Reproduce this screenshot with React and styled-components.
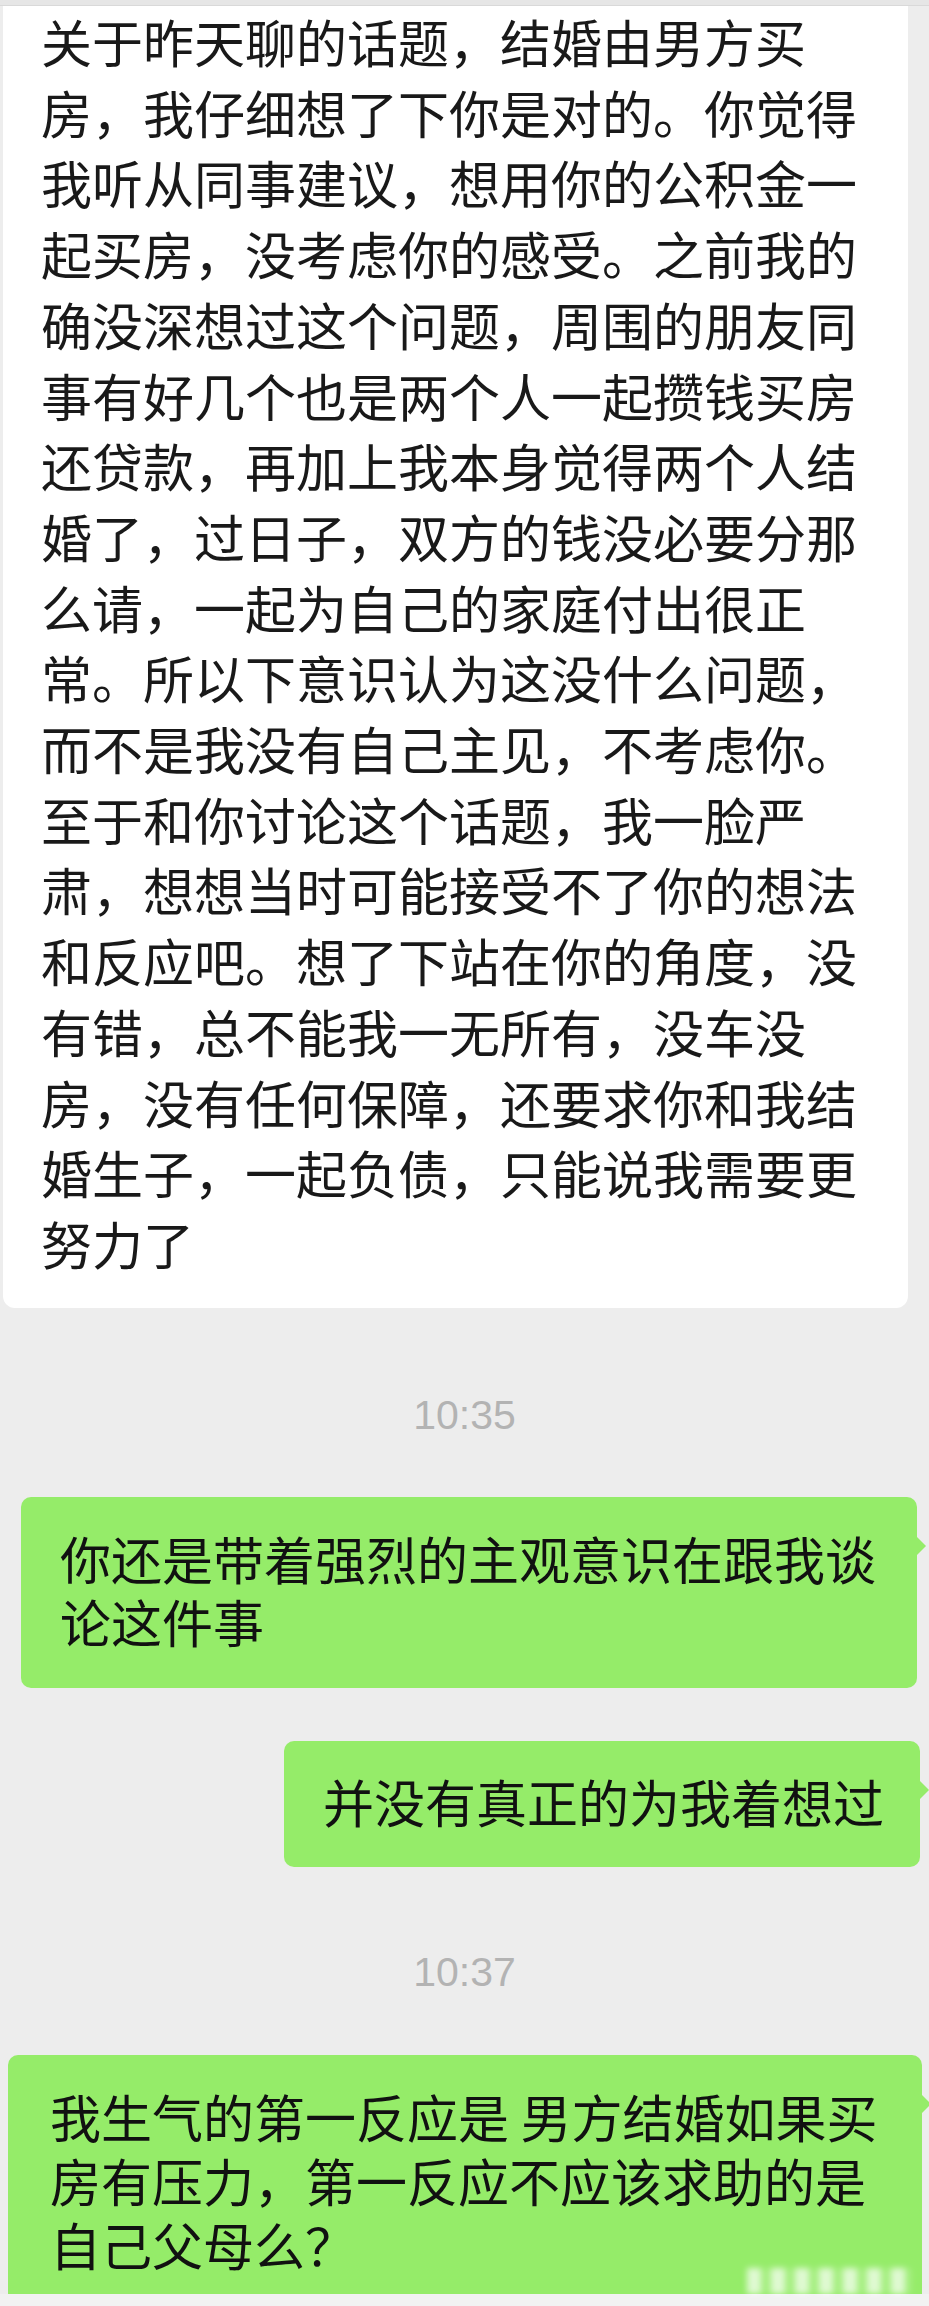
import styled, { createGlobalStyle } from 'styled-components';

const GlobalStyle = createGlobalStyle`
  body {
    margin: 0;
    background: #ededed;
  }
`;

const incoming = '关于昨天聊的话题，结婚由男方买房，我仔细想了下你是对的。你觉得我听从同事建议，想用你的公积金一起买房，没考虑你的感受。之前我的确没深想过这个问题，周围的朋友同事有好几个也是两个人一起攒钱买房还贷款，再加上我本身觉得两个人结婚了，过日子，双方的钱没必要分那么请，一起为自己的家庭付出很正常。所以下意识认为这没什么问题，而不是我没有自己主见，不考虑你。至于和你讨论这个话题，我一脸严肃，想想当时可能接受不了你的想法和反应吧。想了下站在你的角度，没有错，总不能我一无所有，没车没房，没有任何保障，还要求你和我结婚生子，一起负债，只能说我需要更努力了';

export default function App() {
  return (
    <Page>
      <GlobalStyle />
      <TopBar />
      <IncomingBubble>{incoming}</IncomingBubble>

      <Time $top={87}>10:35</Time>

      <OutgoingBubble $top={61} $left={21} $right={12} $pad="30px 34px 35px 39px">
        你还是带着强烈的主观意识在跟我谈论这件事
      </OutgoingBubble>

      <OutgoingBubble $top={53} $right={9} $shrink $pad="29px 36px 34px 39px">
        并没有真正的为我着想过
      </OutgoingBubble>

      <Time $top={85}>10:37</Time>

      <OutgoingBubble $top={62} $left={8} $right={7} $pad="29px 38px 18px 42px" $cut $lh={64}>
        我生气的第一反应是 男方结婚如果买房有压力，第一反应不应该求助的是自己父母么？
        <Watermark aria-hidden="true" />
      </OutgoingBubble>

      <BottomBar />
    </Page>
  );
}

const Page = styled.div`
  width: 929px;
  min-height: 2306px;
  display: flex;
  flex-direction: column;
  background: #ededed;
  font-family: "Noto Sans CJK SC", "Noto Sans", sans-serif;
  color: #191919;
  overflow: hidden;
`;

const TopBar = styled.div`
  height: 5px;
  background: #e6e6e6;
  border-bottom: 1px solid #d9d9d9;
`;

const IncomingBubble = styled.div`
  margin: 0 21px 0 3px;
  padding: 0 37px 29.5px 38px;
  background: #ffffff;
  border-radius: 0 0 12px 12px;
  font-size: 51px;
  line-height: 70.7px;
  line-break: strict;
`;

const Time = styled.div`
  margin-top: ${(p) => p.$top}px;
  text-align: center;
  font-family: "Liberation Sans", Arial, sans-serif;
  font-size: 41px;
  line-height: 41px;
  color: #b3b3b3;
`;

const OutgoingBubble = styled.div`
  position: relative;
  align-self: ${(p) => (p.$shrink ? 'flex-end' : 'stretch')};
  margin-top: ${(p) => p.$top}px;
  margin-left: ${(p) => p.$left || 0}px;
  margin-right: ${(p) => p.$right}px;
  padding: ${(p) => p.$pad};
  background: #95ec69;
  border-radius: ${(p) => (p.$cut ? '10px 10px 0 0' : '10px')};
  color: #111;
  font-size: 51px;
  line-height: ${(p) => p.$lh || 63}px;
  line-break: strict;

  &::after {
    content: '';
    position: absolute;
    top: 40px;
    right: -9px;
    border-left: 9px solid #95ec69;
    border-top: 9px solid transparent;
    border-bottom: 9px solid transparent;
  }
`;

/* blurred, unreadable site watermark in the corner */
const Watermark = styled.span`
  position: absolute;
  right: 10px;
  bottom: 0;
  width: 165px;
  height: 26px;
  background: repeating-linear-gradient(
    90deg,
    rgba(255, 255, 255, 0.7) 0 14px,
    rgba(255, 255, 255, 0.15) 14px 24px
  );
  filter: blur(3px);
`;

const BottomBar = styled.div`
  height: 12px;
  background: #f2f2f2;
`;
